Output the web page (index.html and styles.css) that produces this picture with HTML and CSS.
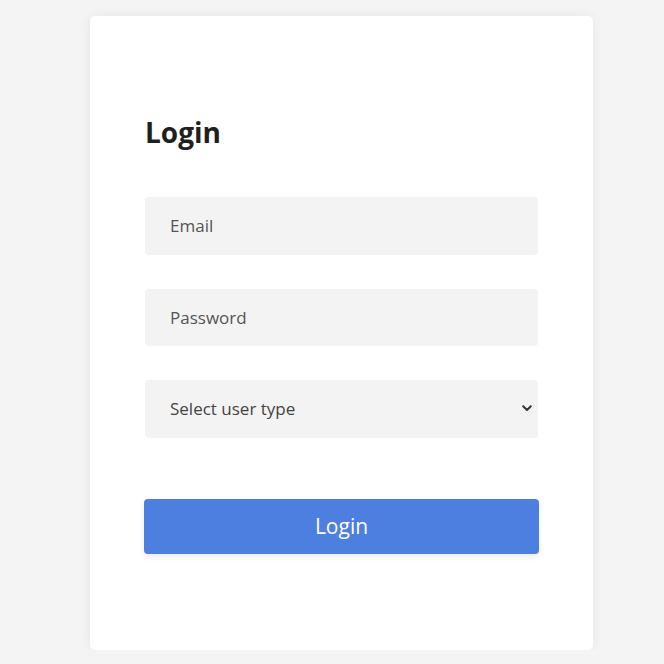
FILE: index.html
```html
<!DOCTYPE html>
<html lang="en">
<head>
<meta charset="utf-8">
<title>Login</title>
<link rel="stylesheet" href="styles.css">
</head>
<body>
<div class="card">
  <h2 class="title">Login</h2>
  <form class="form">
    <input class="field" type="email" placeholder="Email">
    <input class="field" type="password" placeholder="Password">
    <div class="select-wrap">
      <select class="field select">
        <option>Select user type</option>
      </select>
      <svg class="chev" width="10" height="7" viewBox="0 0 10 7"><path d="M1.2 1.2 L5 5 L8.8 1.2" fill="none" stroke="#333" stroke-width="2" stroke-linecap="round" stroke-linejoin="round"/></svg>
    </div>
    <button class="btn" type="button">Login</button>
  </form>
</div>
</body>
</html>
```
FILE: styles.css
```css
html, body {
  margin: 0;
  background: #f4f4f4;
}
body {
  padding: 16px 0 0 90px;
  font-family: "Open Sans", "Liberation Sans", sans-serif;
}
.card {
  box-sizing: border-box;
  width: 503px;
  height: 634px;
  background: #fff;
  border-radius: 5px;
  box-shadow: 0 0 12px rgba(0,0,0,0.06);
  padding: 97px 55px 0;
}
.title {
  margin: 0;
  font-size: 28px;
  font-weight: 700;
  color: #1f1f1f;
  line-height: 38px;
}
.form {
  display: flex;
  flex-direction: column;
  margin-top: 46px;
}
.field {
  display: block;
  box-sizing: border-box;
  width: 393px;
  height: 57.5px;
  border: none;
  outline: none;
  background: #f3f3f3;
  border-radius: 4px;
  padding: 0 25px;
  font-family: inherit;
  font-size: 17px;
  color: #444;
  margin: 0 0 34px;
}
.field::placeholder {
  color: #555;
}
.select-wrap {
  position: relative;
  width: 393px;
}
.select {
  appearance: none;
  -webkit-appearance: none;
  color: #444;
  margin-bottom: 61px;
}
.chev {
  position: absolute;
  right: 6px;
  top: 25px;
}
.btn {
  box-sizing: border-box;
  width: 395px;
  height: 55px;
  margin-left: -1px;
  border: none;
  border-radius: 4px;
  background: #4d7fe0;
  color: #fff;
  font-family: inherit;
  font-size: 21px;
  box-shadow: 0 3px 6px rgba(0,0,0,0.08);
}
```
